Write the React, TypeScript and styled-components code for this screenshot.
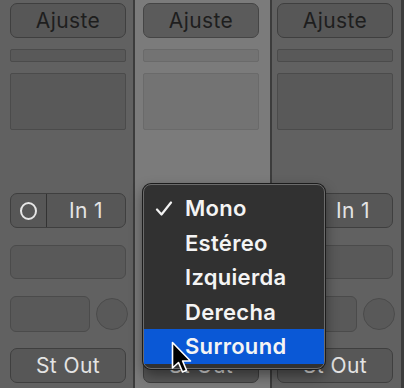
import styled, { createGlobalStyle } from 'styled-components';

const GlobalStyle = createGlobalStyle`
    html, body {
        margin: 0;
        padding: 0;
        background: #3e3e3e;
    }
    body {
        font-family: Inter, 'Noto Sans', 'Liberation Sans', sans-serif;
    }
`;

const Mixer = styled.div`
    position: relative;
    display: flex;
    width: 404px;
    height: 388px;
    overflow: hidden;
    background: #3c3c3c;
`;

const Strip = styled.div<{ $width: number; $inset: number; $bg: string; $gapRight: number }>`
    display: flex;
    flex-direction: column;
    box-sizing: border-box;
    width: ${({ $width }) => $width}px;
    margin-right: ${({ $gapRight }) => $gapRight}px;
    padding: 3px 0 0 ${({ $inset }) => $inset}px;
    background: ${({ $bg }) => $bg};
`;

const Button = styled.div<{ $mt?: number; $tone: 'dark' | 'light'; $selected?: boolean }>`
    display: flex;
    align-items: center;
    justify-content: center;
    box-sizing: border-box;
    width: 116px;
    height: 35px;
    margin-top: ${({ $mt = 0 }) => $mt}px;
    border-radius: 7px;
    border: 1px solid ${({ $selected }) => ($selected ? '#454545' : '#3f3f3f')};
    background: ${({ $selected }) => ($selected ? '#5b5b5b' : '#575757')};
    color: ${({ $tone }) => ($tone === 'dark' ? '#1e1e1e' : '#e4e4e4')};
    font-size: 21px;
    letter-spacing: 0.4px;
`;

const Slot = styled.div<{ $mt: number; $h: number; $w?: number; $selected?: boolean; $radius?: number }>`
    box-sizing: border-box;
    width: ${({ $w = 116 }) => $w}px;
    height: ${({ $h }) => $h}px;
    margin-top: ${({ $mt }) => $mt}px;
    border-radius: ${({ $radius = 3 }) => $radius}px;
    border: 1px solid ${({ $selected }) => ($selected ? '#6a6a6a' : '#4b4b4b')};
    background: ${({ $selected }) => ($selected ? '#737373' : '#595959')};
`;

const InputGroup = styled.div<{ $mt: number }>`
    display: flex;
    box-sizing: border-box;
    width: 116px;
    height: 35px;
    margin-top: ${({ $mt }) => $mt}px;
    border-radius: 7px;
    border: 1px solid #3f3f3f;
    background: #575757;
    color: #e4e4e4;
    font-size: 21px;
    overflow: hidden;
`;

const MonoSegment = styled.div`
    display: flex;
    align-items: center;
    justify-content: center;
    width: 35px;
    border-right: 1px solid #333;
`;

const MonoRing = styled.span`
    display: block;
    width: 13px;
    height: 14px;
    border: 2px solid #e6e6e6;
    border-radius: 50%;
`;

const InputLabel = styled.div`
    flex: 1;
    display: flex;
    align-items: center;
    justify-content: center;
    letter-spacing: 0.4px;
`;

const SendRow = styled.div<{ $mt: number }>`
    display: flex;
    align-items: center;
    gap: 6px;
    margin-top: ${({ $mt }) => $mt}px;
`;

const Knob = styled.div`
    box-sizing: border-box;
    width: 32px;
    height: 32px;
    border-radius: 50%;
    border: 1px solid #4b4b4b;
    background: #595959;
`;

const Menu = styled.div`
    position: absolute;
    left: 143px;
    top: 184px;
    box-sizing: border-box;
    width: 182px;
    height: 185px;
    padding: 6px 0;
    border-radius: 8px;
    border: 1px solid #6b6b6b;
    background: #313131;
    box-shadow: 0 0 0 1px #1c1c1c, 0 6px 14px rgba(0, 0, 0, 0.45);
`;

const MenuItem = styled.div<{ $active?: boolean }>`
    position: relative;
    display: flex;
    align-items: center;
    height: 34.5px;
    padding-left: 41px;
    background: ${({ $active }) => ($active ? '#0a58d6' : 'transparent')};
    color: #f4f4f4;
    font-size: 22px;
    font-weight: 600;
    letter-spacing: 0.3px;
`;

const Check = styled.svg`
    position: absolute;
    left: 11px;
    top: 10px;
`;

const Cursor = styled.svg`
    position: absolute;
    left: 171px;
    top: 341px;
`;

type StripProps = {
    width: number;
    inset: number;
    gapRight: number;
    selected?: boolean;
};

const ChannelStrip = ({ width, inset, gapRight, selected }: StripProps) => (
    <Strip $width={width} $inset={inset} $gapRight={gapRight} $bg={selected ? '#7b7b7b' : '#616161'}>
        <Button $tone='dark' $selected={selected}>Ajuste</Button>
        <Slot $mt={11} $h={13} $selected={selected} $radius={2} />
        <Slot $mt={11} $h={57} $selected={selected} $radius={2} />
        <InputGroup $mt={63}>
            <MonoSegment>
                <MonoRing />
            </MonoSegment>
            <InputLabel>In 1</InputLabel>
        </InputGroup>
        <Slot $mt={17} $h={34} $radius={6} />
        <SendRow $mt={17}>
            <Slot $mt={0} $h={36} $w={80} $radius={6} />
            <Knob />
        </SendRow>
        <Button $mt={16} $tone='light'>St Out</Button>
    </Strip>
);

const items = ['Mono', 'Estéreo', 'Izquierda', 'Derecha', 'Surround'];

export default function App() {
    return (
        <Mixer>
            <GlobalStyle />
            <ChannelStrip width={133} inset={10} gapRight={2} />
            <ChannelStrip width={135} inset={8} gapRight={2} selected />
            <ChannelStrip width={129} inset={5} gapRight={0} />

            <Menu>
                {items.map((label, i) => (
                    <MenuItem key={label} $active={i === items.length - 1}>
                        {i === 0 && (
                            <Check width='18' height='16' viewBox='0 0 18 16'>
                                <path d='M2 8.5 L6.5 13.5 L16 1.5' fill='none' stroke='#f2f2f2' strokeWidth='2.2' strokeLinecap='round' strokeLinejoin='round' />
                            </Check>
                        )}
                        {label}
                    </MenuItem>
                ))}
            </Menu>

            <Cursor width='24' height='36' viewBox='0 0 24 36'>
                <path d='M1.5 1.5 L1.5 27 L7.5 21.5 L11.5 31 L15.5 29.3 L11.6 20 L19.5 20 Z' fill='#000' stroke='#fff' strokeWidth='1.6' strokeLinejoin='round' />
            </Cursor>
        </Mixer>
    );
}
